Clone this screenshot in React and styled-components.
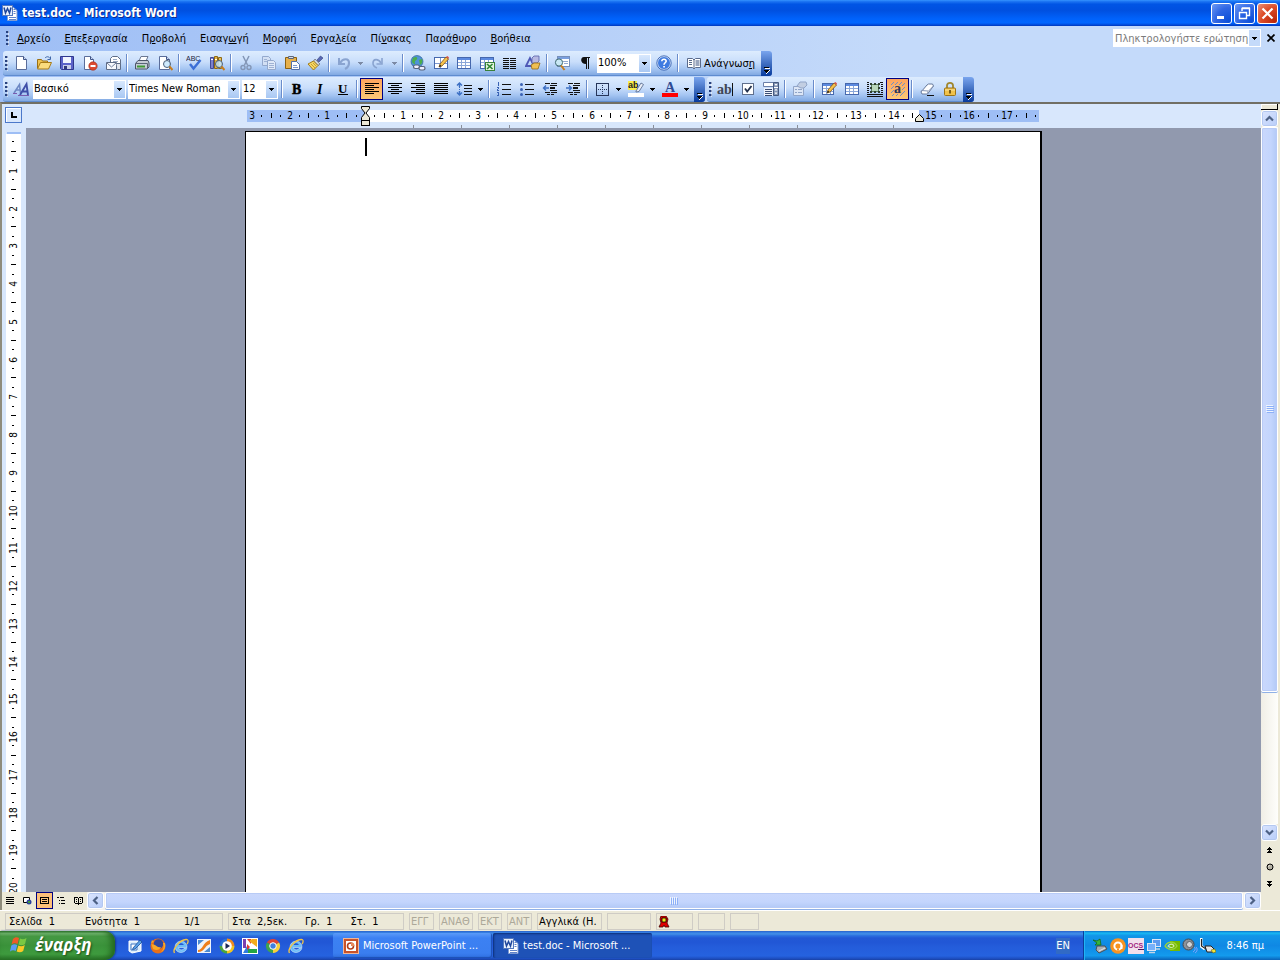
import styled, { createGlobalStyle } from 'styled-components';

const GlobalStyle = createGlobalStyle`
  * {
    box-sizing: border-box;
  }

  body {
    margin: 0;
    overflow: hidden;
  }

  body, button, input, select {
    font-family: 'DejaVu Sans Condensed', 'DejaVu Sans', sans-serif;
    font-size: 11px;
    color: #000;
  }

  button {
    padding: 0;
    border: none;
    background: none;
  }

  svg {
    display: block;
    flex: none;
  }
`;

const Window = styled.div`
  height: 100vh;
  display: flex;
  flex-direction: column;
  background: #ece9d8;
`;

/* ---------- title bar ---------- */

const TitleBar = styled.header`
  height: 26px;
  flex: none;
  display: flex;
  align-items: center;
  gap: 4px;
  padding: 0 2px;
  background: linear-gradient(#3593ff 0, #1b74f2 6%, #0055e5 16%, #0050e0 40%, #0062fb 72%, #0066ff 88%, #0048d8 96%, #0036b8);
`;

const Title = styled.h1`
  flex: 1;
  margin: 0;
  color: #fff;
  font-size: 12px;
  font-weight: bold;
  text-shadow: 1px 1px #0f2a8c;
`;

const CaptionButtons = styled.div`
  display: flex;
  gap: 2px;
`;

const CaptionButton = styled.button`
  width: 21px;
  height: 21px;
  display: grid;
  place-items: center;
  border: 1px solid #fff;
  border-radius: 3px;
  background: ${({ $close }) =>
    $close
      ? 'radial-gradient(circle at 90% 90%, #b8260a 0, #dc4a25 55%, #e9927a 100%)'
      : 'radial-gradient(circle at 90% 90%, #0c4fd8 0, #2f66e4 55%, #6f9bf5 100%)'};
`;

/* ---------- menus and toolbars ---------- */

const CommandArea = styled.div`
  flex: none;
  background: linear-gradient(90deg, #9ebef5, #c4dafa 70%);
`;

const MenuBar = styled.nav`
  height: 24px;
  display: flex;
  align-items: center;
  padding: 0 0 0 4px;
`;

const MenuItems = styled.div`
  flex: 1;
  display: flex;
`;

const MenuItem = styled.button`
  height: 20px;
  padding: 0 7px;
  white-space: nowrap;
`;

const AskBox = styled.div`
  display: flex;
  width: 148px;
  height: 18px;
  background: #fff;
  border: 1px solid #fff;
`;

const AskInput = styled.input`
  flex: 1;
  min-width: 0;
  border: none;
  padding: 0 1px;
  background: #fff;

  &::placeholder {
    color: #7b7b7b;
    opacity: 1;
  }
`;

const DropButton = styled.button`
  width: 11px;
  display: grid;
  place-items: center;
  background: #c4dafa;
`;

const CloseDocument = styled.button`
  width: 18px;
  height: 18px;
  margin-left: 1px;
  display: grid;
  place-items: center;
`;

const ToolbarRow = styled.div`
  height: 26px;
  display: flex;
  gap: 2px;
  padding: 1px 0 0 3px;
`;

const Bar = styled.div`
  height: 25px;
  display: flex;
  align-items: center;
  border-radius: 3px;
  background: linear-gradient(#ddecfe, #c9defb 45%, #a5c5f2 75%, #81a9e2);
  border-bottom: 1px solid #5f8ccf;
`;

const Grip = styled.span`
  width: 3px;
  height: 15px;
  margin: 0 1px 0 2px;
  background: repeating-linear-gradient(#27417f 0 2px, transparent 2px 4px);
  border-right: 1px solid #ffffff88;
`;

const ToolButton = styled.button`
  width: ${({ $narrow }) => ($narrow ? 11 : 23)}px;
  height: 22px;
  display: grid;
  place-items: center;
  border: 1px solid ${({ $active }) => ($active ? '#000080' : 'transparent')};
  background: ${({ $active }) => ($active ? 'linear-gradient(#fea55e, #fdc877)' : 'none')};
`;

const TextButton = styled.button`
  height: 22px;
  display: flex;
  align-items: center;
  gap: 2px;
  padding: 0 4px 0 5px;
`;

const Separator = styled.span`
  width: 2px;
  height: 18px;
  margin: 0 2px;
  background: linear-gradient(90deg, #6a8ccb 50%, #fff 50%);
`;

const Overflow = styled.button`
  align-self: stretch;
  width: 11px;
  margin: 0 0 -1px 2px;
  display: flex;
  align-items: flex-end;
  justify-content: center;
  padding-bottom: 2px;
  border-radius: 0 3px 3px 0;
  background: linear-gradient(#7aa5ee, #3a69bd 55%, #083b9e);
`;

const ComboFrame = styled.span`
  position: relative;
  width: ${({ $width }) => $width}px;
  height: 19px;
  margin: 0 1px;
  display: flex;
  background: #fff;
`;

const ComboSelect = styled.select`
  appearance: none;
  flex: 1;
  min-width: 0;
  border: 1px solid #fff;
  background: #fff;
  padding: 0 0 2px;
`;

const ComboArrow = styled.span`
  position: absolute;
  top: 1px;
  right: 1px;
  bottom: 1px;
  width: 11px;
  display: grid;
  place-items: center;
  background: linear-gradient(#d8e8fd, #a9c8f3);
  pointer-events: none;
`;

/* ---------- document area ---------- */

const Main = styled.main`
  flex: 1;
  min-height: 0;
  display: flex;
  border-top: 2px solid #716f64;
  border-left: 2px solid #8f8c7c;
`;

const DocumentColumn = styled.div`
  flex: 1;
  min-width: 0;
  display: flex;
  flex-direction: column;
`;

const RulerRow = styled.div`
  height: 24px;
  flex: none;
  display: flex;
  background: #d8e7fc;
`;

const TabCorner = styled.div`
  width: 24px;
  flex: none;
  padding: 3px;
`;

const TabSelector = styled.button`
  width: 17px;
  height: 16px;
  display: grid;
  place-items: center;
  border: 1px solid #4b78ca;
  background: #d8e7fc;
  box-shadow: inset 1px 1px #fff;
`;

const Centered = styled.div`
  flex: 1;
  display: flex;
  justify-content: center;
  overflow: hidden;
`;

const Workspace = styled.div`
  flex: 1;
  min-height: 0;
  display: flex;
  background: #9199ae;
`;

const SideRuler = styled.div`
  width: 24px;
  flex: none;
  padding: 4px 5px 0 4px;
  overflow: hidden;
  background: #d8e7fc;
`;

const Page = styled.article`
  width: 797px;
  margin-top: 3px;
  padding: 6px 119px;
  background: #fff;
  border: solid #000;
  border-width: 1px 2px 0 1px;
`;

const Caret = styled.span`
  display: block;
  width: 2px;
  height: 18px;
  background: #000;
`;

/* ---------- scroll bars ---------- */

const ScrollButton = styled.button`
  width: 17px;
  height: 17px;
  flex: none;
  display: grid;
  place-items: center;
  border: 1px solid #fff;
  border-radius: 3px;
  background: linear-gradient(135deg, #dbe5fe, #b8cdf9);
  box-shadow: inset 0 0 0 1px #b4c8f0;
`;

const BottomRow = styled.div`
  height: 18px;
  flex: none;
  display: flex;
  background: #ece9d8;
`;

const ViewButton = styled.button`
  width: 17px;
  height: 17px;
  display: grid;
  place-items: center;
  border: 1px solid ${({ $active }) => ($active ? '#000080' : 'transparent')};
  background: ${({ $active }) => ($active ? '#fdc079' : 'none')};
`;

const HorizontalTrack = styled.div`
  flex: 1;
  display: flex;
  gap: 1px;
  padding: 0 0 1px;
  background: #f3f1ec;
`;

const HorizontalThumb = styled.div`
  flex: 1;
  display: grid;
  place-items: center;
  border: 1px solid #fff;
  border-radius: 2px;
  background: linear-gradient(#cad8fc, #c3d5fd 60%, #b2c9f6);
  box-shadow: inset 0 0 0 1px #b8cbf6, 0 1px #8fb0e6;
`;

const ScrollColumn = styled.div`
  width: 19px;
  flex: none;
  display: flex;
  flex-direction: column;
  padding-right: 2px;
  background: #ece9d8;
`;

const SplitBox = styled.div`
  height: 6px;
  flex: none;
  border: solid #000;
  border-width: 0 1px 1px 0;
  background: #ece9d8;
  box-shadow: inset 1px 1px #fff;
`;

const VerticalTrack = styled.div`
  flex: 1;
  min-height: 0;
  background: linear-gradient(90deg, #f0eee6, #fefefb);
`;

const VerticalThumb = styled.div`
  height: 81%;
  display: grid;
  place-items: center;
  border: 1px solid #fff;
  border-radius: 2px;
  background: linear-gradient(90deg, #cad8fc, #c3d5fd 60%, #b2c9f6);
  box-shadow: inset 0 0 0 1px #b8cbf6, 0 1px #8fb0e6;
`;

const BrowseButtons = styled.div`
  flex: none;
  display: flex;
  flex-direction: column;
  margin-bottom: 18px;
`;

const BrowseButton = styled.button`
  height: 17px;
  display: grid;
  place-items: center;
`;

/* ---------- status bar ---------- */

const StatusBar = styled.footer`
  height: 21px;
  flex: none;
  display: flex;
  align-items: center;
  gap: 5px;
  padding: 1px 5px 0;
  border-top: 1px solid #fff;
  background: #ece9d8;
`;

const StatusCell = styled.div`
  width: ${({ $width }) => $width}px;
  height: 17px;
  display: flex;
  align-items: center;
  gap: ${({ $gap }) => $gap || 0}px;
  padding: 0 1px;
  border: 1px solid #cfccc5;
  white-space: nowrap;
  color: ${({ $off }) => ($off ? '#aca899' : '#000')};
`;

const StatusText = styled.span`
  padding: 0 2px;
`;

const StatusEnd = styled.span`
  margin-left: auto;
  padding-right: 21px;
`;

/* ---------- taskbar ---------- */

const TaskBar = styled.footer`
  height: 29px;
  flex: none;
  display: flex;
  background: linear-gradient(#2a62c8 0, #3682e5 6%, #4490e6 10%, #2b71e0 16%, #2258d5 24%, #2157d6 40%, #245ddb 56%, #2562df 86%, #1d4ec0 95%, #1941a5);
`;

const StartButton = styled.button`
  width: 115px;
  display: flex;
  align-items: center;
  gap: 5px;
  padding: 0 0 2px 10px;
  border-radius: 0 10px 10px 0;
  color: #fff;
  font-family: 'Open Sans', 'Noto Sans', sans-serif;
  font-size: 17px;
  font-style: italic;
  font-weight: bold;
  text-shadow: 1px 1px 2px #1c4a16;
  background: linear-gradient(#347a35 0, #7cc07a 8%, #479a45 18%, #3a923a 50%, #3f9c3f 80%, #2a7529 100%);
  box-shadow: inset -4px 0 6px #23671f, 1px 0 2px #133a8a;
`;

const QuickLaunch = styled.div`
  width: 218px;
  display: flex;
  align-items: center;
  padding-left: 8px;
`;

const QuickButton = styled.button`
  width: 23px;
  height: 24px;
  display: grid;
  place-items: center;
`;

const TaskList = styled.div`
  flex: 1;
  display: flex;
  align-items: center;
  gap: 1px;
`;

const TaskButton = styled.button`
  width: 159px;
  height: 25px;
  display: flex;
  align-items: center;
  gap: 4px;
  padding-left: 10px;
  color: #fff;
  border-radius: 2px;
  background: ${({ $active }) =>
    $active ? '#1e52b7' : 'linear-gradient(#5a9bf8, #3c81f3 20%, #3a7ef0 80%, #2f6fe0)'};
  box-shadow: ${({ $active }) =>
    $active ? 'inset 1px 1px 2px #0d2f78' : 'inset -1px -1px 1px #1d4fb5'};
`;

const Language = styled.button`
  align-self: center;
  width: 14px;
  height: 16px;
  margin-right: 13px;
  color: #fff;
  background: #316ac5;
`;

const Tray = styled.div`
  width: 197px;
  display: flex;
  align-items: center;
  padding: 0 16px 0 8px;
  color: #fff;
  border-left: 1px solid #0b3f9c;
  background: linear-gradient(#0c6fc9 0, #19b9f3 7%, #1296e8 16%, #0f88e4 50%, #139bee 85%, #0a62b8);
  box-shadow: inset 1px 0 #20b4f5;
`;

const TrayIcons = styled.div`
  flex: 1;
  display: flex;
  gap: 2px;
`;

/* ---------- drawings ---------- */

const Icon = ({ size = 16, box = 16, children }) => (
  <svg width={size} height={size} viewBox={`0 0 ${box} ${box}`} fill="none" aria-hidden="true">
    {children}
  </svg>
);

const Down = ({ color = '#000' }) => (
  <svg width="5" height="3" viewBox="0 0 5 3" shapeRendering="crispEdges" aria-hidden="true">
    <path d="M0 0h5v1H4v1H3v1H2V2H1V1H0z" fill={color} />
  </svg>
);

const Chevron = ({ turn }) => (
  <svg width="9" height="9" viewBox="0 0 9 9" fill="none" aria-hidden="true">
    <path d="M1 6.500l3.500-3.500L8 6.500" stroke="#4d6185" strokeWidth="2.200" transform={`rotate(${turn} 4.500 4.500)`} />
  </svg>
);

const OverflowMark = () => (
  <svg width="7" height="8" viewBox="0 0 7 8" shapeRendering="crispEdges" aria-hidden="true">
    <path d="M2 2h5v1H2zM2 4h5v1H6v1H5v1H4v1H3V6h1V5H2z" fill="#fff" />
    <path d="M1 1h5v1H1zM1 4h5v1H5v1H4v1H3V6H2V5H1z" fill="#000" />
  </svg>
);

const Sheet = ({ x = 3, y = 1, w = 10, h = 14 }) => (
  <>
    <path d={`M${x}.5 ${y}.5h${w - 3}l3 3v${h - 4}h-${w}z`} fill="#fff" stroke="#5a6d9a" />
    <path d={`M${x + w - 3}.5 ${y}.5v3h3`} fill="#cbd9f3" stroke="#3f5487" />
  </>
);

const TableGrid = ({ w = 13 }) => (
  <>
    <rect x="1.500" y="2.500" width={w} height="11" fill="#fff" stroke="#4668ad" />
    <path d={`M2 3h${w - 1}v2H2z`} fill="#5c8ae0" />
    <path d={`M2 7.500h${w - 1}M2 10.500h${w - 1}M5.500 5v8M9.500 5v8`} stroke="#8ba7d8" />
  </>
);

const Glass = () => (
  <>
    <circle cx="10" cy="9" r="3.500" fill="#c7e6fb" fillOpacity=".85" stroke="#4d6078" />
    <path d="M12.500 11.500l3 3.500" stroke="#c77d1d" strokeWidth="2" />
  </>
);

const Pencil = () => (
  <>
    <path d="M6 12l1-3 6-7 2.500 2-6.500 7z" fill="#f7c34c" stroke="#7f5213" strokeWidth=".8" />
    <path d="M13 2l2.500 2 .5-1.500L14.500 1z" fill="#d9534b" />
    <path d="M6 12l1-2.500L8.500 11z" fill="#222" />
  </>
);

const WordIcon = () => (
  <Icon>
    <path d="M5.500 2.500h6l3.500 3v10H5.500z" fill="#fff" stroke="#7f9bd2" />
    <path d="M11.500 4.500h2M11.500 6.500h2M11.500 8.500h2M7 12.500h7M7 14.500h7" stroke="#5f83c9" />
    <rect x=".500" y=".500" width="10" height="10" fill="#eaf1fd" stroke="#5579bd" />
    <path d="M2 2.500l1.500 5.500L5.500 3.500l2 4.500L9 2.500" stroke="#1f479c" strokeWidth="1.500" />
  </Icon>
);

const lines = (rows) => rows.map(([x, w], i) => <path key={i} d={`M${x} ${2 + i * 2}h${w}v1h-${w}z`} fill="#000" />);

const icons = {
  newDoc: <Sheet />,
  open: (
    <>
      <path d="M1.500 13V4.500h4l1 1.500h5v2" fill="#f0c350" stroke="#9a7014" />
      <path d="M1.500 14l3-6.500h11L12.500 14z" fill="#fbdc7e" stroke="#a67a18" />
      <path d="M9 3c2-2 4-1.500 5 .500M14.500 1.500v3h-3" stroke="#3f67a8" />
    </>
  ),
  save: (
    <>
      <path d="M1.500 1.500h13v13h-12l-1-1z" fill="#5b62c8" stroke="#2f378d" />
      <path d="M4 2h8v6H4z" fill="#f1f4ff" />
      <path d="M4 10h8v4H4z" fill="#c8cde8" />
      <path d="M5 11h3v3H5z" fill="#30387c" />
    </>
  ),
  permission: (
    <>
      <Sheet x={2} w={9} />
      <circle cx="11" cy="11" r="4.200" fill="#dc4a31" stroke="#a02613" strokeWidth=".6" />
      <path d="M8.500 11h5" stroke="#fff" strokeWidth="2" />
    </>
  ),
  mail: (
    <>
      <path d="M5.500 8V3.500l2-2h5l3 3V12" fill="#fff" stroke="#5f6d86" />
      <path d="M8 4.500h4M8 6.500h5" stroke="#9baac4" />
      <path d="M1.500 7.500h10v7h-10z" fill="#f7f9fd" stroke="#5f6d86" />
      <path d="M2 8l4.500 4L11 8" stroke="#707f9d" />
      <path d="M11.500 8.500h4v6h-3" fill="#e2e6ee" stroke="#5f6d86" />
    </>
  ),
  print: (
    <>
      <path d="M5 6l2-4.500h7L12 6" fill="#fff" stroke="#6b7891" />
      <path d="M1.500 8.500l2.500-3h10l1 2.500v4l-2 2H1.500z" fill="#c6ccd6" stroke="#4c5567" />
      <path d="M2 8.500h11.500v5" stroke="#5a6478" />
      <path d="M3 11.500h8" stroke="#3f9a34" strokeWidth="2" />
    </>
  ),
  preview: (
    <>
      <Sheet x={2} w={10} />
      <Glass />
    </>
  ),
  spell: (
    <>
      <text x="0" y="6" fontSize="7" fontFamily="Liberation Sans, sans-serif" fill="#1c2440">ABC</text>
      <path d="M4 9l3.500 4.500L14.500 5" stroke="#3c6fd6" strokeWidth="2.400" />
    </>
  ),
  research: (
    <>
      <path d="M1.500 2.500h3v11h-3z" fill="#7c82cf" stroke="#454b95" />
      <path d="M5.500 1.500h3v12h-3z" fill="#e2b448" stroke="#8f6a15" />
      <path d="M9.500 2.500h3v11h-3z" fill="#e7c05c" stroke="#8f6a15" />
      <path d="M2 4.500h2M6 4.500h2" stroke="#fff" />
      <Glass />
    </>
  ),
  cut: (
    <>
      <path d="M5 1l4.500 9M11 1l-4.500 9" stroke="#8396b6" strokeWidth="1.500" />
      <circle cx="5" cy="12.500" r="2" stroke="#8396b6" strokeWidth="1.400" />
      <circle cx="11" cy="12.500" r="2" stroke="#8396b6" strokeWidth="1.400" />
    </>
  ),
  copy: (
    <>
      <path d="M1.500 1.500h6l2 2v7h-8z" fill="#d3e0f4" stroke="#94a9cd" />
      <path d="M6.500 5.500h6l2 2v7h-8z" fill="#dfe9f8" stroke="#94a9cd" />
      <path d="M8 8.500h5M8 10.500h5M8 12.500h5M3 4.500h3M3 6.500h3" stroke="#9fb2d3" />
    </>
  ),
  paste: (
    <>
      <path d="M1.500 2.500h11v11h-11z" fill="#e6b04b" stroke="#8b6112" />
      <path d="M4.500 1.500h5v2h-5z" fill="#d8dce6" stroke="#5d6678" />
      <path d="M7.500 6.500h5l3 3v5h-8z" fill="#fff" stroke="#5371ab" />
      <path d="M9 10.500h4M9 12.500h5" stroke="#7a97cf" />
    </>
  ),
  brush: (
    <>
      <path d="M10 5l3.500-4L16 3l-4 4z" fill="#5868b4" stroke="#343f7c" strokeWidth=".6" />
      <path d="M8 4l5 5-2 1.500L6.500 6z" fill="#cfd4dc" stroke="#6d7583" strokeWidth=".8" />
      <path d="M6.500 6L1 9l5.500 6L11 10.500z" fill="#f5d765" stroke="#a27c19" />
      <path d="M4 9l4 4M6 8l3.500 3.500" stroke="#c89d2d" />
    </>
  ),
  undo: (
    <>
      <path d="M3 3v6h6" stroke="#8aa4d0" strokeWidth="2" />
      <path d="M4 8c3-5 9-5 9 0 0 3-2 5-4 6" stroke="#8aa4d0" strokeWidth="2.200" />
    </>
  ),
  redo: (
    <>
      <path d="M12 3v6H6.500" stroke="#8aa4d0" strokeWidth="1.600" />
      <path d="M11 8c-3-5-8-4-8 0 0 2 1 4 4 5" stroke="#8aa4d0" strokeWidth="1.600" />
    </>
  ),
  link: (
    <>
      <circle cx="7" cy="6.500" r="6" fill="#4f93d8" stroke="#235788" strokeWidth=".6" />
      <path d="M3 3c3-2 5-1 4 1s-3 2-2 4-3 1-3-2zM9 5l3-1c1 3 0 5-2 6z" fill="#4cae4a" />
      <rect x="3.500" y="10" width="6" height="3.500" rx="1.700" fill="#eef" stroke="#56627b" strokeWidth="1.200" />
      <rect x="9" y="11.500" width="6" height="3.500" rx="1.700" fill="#eef" stroke="#56627b" strokeWidth="1.200" />
    </>
  ),
  borders: (
    <>
      <rect x="1.500" y="2.500" width="13" height="11" fill="#fff" stroke="#4668ad" />
      <path d="M2 8.500h12M7.500 3v10" stroke="#7d98cd" />
      <Pencil />
    </>
  ),
  table: <TableGrid />,
  excel: (
    <>
      <TableGrid />
      <rect x="6.500" y="7.500" width="9" height="8" fill="#e4f4df" stroke="#39803a" />
      <path d="M8 9l5.500 5M13.500 9L8 14" stroke="#2c8430" strokeWidth="1.600" />
    </>
  ),
  columns: (
    <path d="M1 3h6v1H1zM1 5h6v1H1zM1 7h6v1H1zM1 9h6v1H1zM1 11h6v1H1zM1 13h6v1H1zM8 3h6v1H8zM8 5h6v1H8zM8 7h6v1H8zM8 9h6v1H8zM8 11h6v1H8zM8 13h6v1H8z" fill="#111" />
  ),
  drawing: (
    <>
      <path d="M1 11L5 3l4 8z" stroke="#4e58b6" strokeWidth="1.800" />
      <path d="M7 3l2-2h5v5l-2 2H7z" fill="#b7b9e2" stroke="#595fa8" strokeWidth=".8" />
      <path d="M6 10l3-2h6l-2 6H7z" fill="#eebf53" stroke="#956a14" strokeWidth=".8" />
    </>
  ),
  docMap: (
    <>
      <rect x="3.500" y="1.500" width="12" height="10" fill="#fff" stroke="#7790ba" />
      <path d="M4 2h11v2H4z" fill="#7ba0e0" />
      <path d="M9 6.500h5M10 8.500h4" stroke="#93a9d1" />
      <circle cx="5" cy="7.500" r="3.600" fill="#c9e8f5" stroke="#3f6a71" />
      <path d="M7 10.500l3.500 4.500" stroke="#c77d1d" strokeWidth="2" />
    </>
  ),
  pilcrow: <path d="M7 2h6v1h-1v11h-1V3h-1v11H9V9C3 9 3 2 7 2z" fill="#111" />,
  help: (
    <>
      <circle cx="8" cy="8" r="6.500" fill="#3f7be0" stroke="#dce8fb" />
      <circle cx="8" cy="8" r="7.200" stroke="#2b57a9" strokeWidth=".8" />
      <path d="M5.800 6.200C6 3.500 10.300 3.800 10.200 6.200 10 7.800 8 7.800 8 9.800" stroke="#fff" strokeWidth="1.600" />
      <path d="M7.200 11h1.700v1.600H7.200z" fill="#fff" />
    </>
  ),
  read: (
    <>
      <path d="M1.500 3.500h5L8 5l1.500-1.500h5v9h-5L8 14l-1.500-1.500h-5z" fill="#fff" stroke="#5a6b8c" />
      <path d="M8 5v9M3 5.500h3M3 7.500h3M3 9.500h3" stroke="#5a6b8c" />
      <path d="M9.500 5h4v6h-4z" fill="#9aa6be" />
    </>
  ),
  styles: (
    <>
      <path d="M1 12L6.500 3.500 7.500 12M3.500 9H7" stroke="#6d88c4" strokeWidth="1.600" />
      <path d="M7 14l6.500-11L15 14M9.500 10.500H14" stroke="#3e4fa8" strokeWidth="1.900" />
      <path d="M0 12.500h4M5 14.500h11" stroke="#7a5cae" />
    </>
  ),
  bold: <text x="3" y="13" fontFamily="Liberation Serif, serif" fontWeight="bold" fontSize="14" fill="#000" stroke="#000" strokeWidth=".5">B</text>,
  italic: <text x="5" y="13" fontFamily="Liberation Serif, serif" fontWeight="bold" fontStyle="italic" fontSize="14" fill="#000">I</text>,
  underline: (
    <>
      <text x="3" y="12" fontFamily="Liberation Serif, serif" fontWeight="bold" fontSize="13" fill="#000">U</text>
      <path d="M3 13.500h10" stroke="#000" />
    </>
  ),
  left: lines([[1, 14], [1, 9], [1, 14], [1, 9], [1, 14], [1, 9]]),
  center: lines([[1, 14], [4, 8], [1, 14], [4, 8], [1, 14], [4, 8]]),
  right: lines([[1, 14], [6, 9], [1, 14], [6, 9], [1, 14], [6, 9]]),
  justify: lines([[1, 14], [1, 14], [1, 14], [1, 14], [1, 14], [1, 14]]),
  spacing: (
    <>
      <path d="M3.500 2v4M3.500 10v4M1 4.500L3.500 2 6 4.500M1 11.500L3.500 14 6 11.500" stroke="#3d70c4" strokeWidth="1.500" />
      <path d="M3.500 6v4" stroke="#3d70c4" strokeDasharray="1 1" />
      <path d="M8 4h8v1H8zM8 7h8v1H8zM8 10h8v1H8zM8 13h8v1H8z" fill="#111" />
    </>
  ),
  numbers: (
    <>
      <path d="M2 1h1v4H2zM1 6h2v2H2v1h1v1H1V8h1V7H1zM1 11h2v4H1v-1h1v-2H1z" fill="#3a62b4" />
      <path d="M6 3h9v1H6zM6 8h9v1H6zM6 13h9v1H6z" fill="#111" />
    </>
  ),
  bullets: (
    <>
      <circle cx="2.500" cy="3.500" r="1.500" fill="#3a62b4" />
      <circle cx="2.500" cy="8.500" r="1.500" fill="#3a62b4" />
      <circle cx="2.500" cy="13.500" r="1.500" fill="#3a62b4" />
      <path d="M6 3h9v1H6zM6 8h9v1H6zM6 13h9v1H6z" fill="#111" />
    </>
  ),
  outdent: (
    <>
      <path d="M3 2h5v1H3zM9 2h6v1H9zM8 4h7v1H8zM8 6h5v2H8zM8 9h7v1H8zM3 11h5v1H3zM9 11h6v1H9zM5 13h3v1H5zM9 13h3v1H9z" fill="#111" />
      <path d="M7 7H1.500M4 4.500L1.500 7 4 9.500" stroke="#3d70c4" strokeWidth="1.400" />
    </>
  ),
  indent: (
    <>
      <path d="M3 2h5v1H3zM9 2h6v1H9zM8 4h7v1H8zM8 6h5v2H8zM8 9h7v1H8zM3 11h5v1H3zM9 11h6v1H9zM5 13h3v1H5zM9 13h3v1H9z" fill="#111" />
      <path d="M1 7h5.500M4 4.500L6.500 7 4 9.500" stroke="#3d70c4" strokeWidth="1.400" />
    </>
  ),
  outline: (
    <>
      <rect x="2.500" y="2.500" width="12" height="12" stroke="#26355a" />
      <path d="M8.500 4v10M4 8.500h10" stroke="#26355a" strokeDasharray="1 1" />
    </>
  ),
  highlight: (
    <>
      <rect x="0" y="0" width="9" height="9" fill="#f8ee4a" />
      <text x="0" y="7" fontSize="9" fontWeight="bold" fontFamily="Liberation Sans, sans-serif" fill="#222">ab</text>
      <path d="M8 10l5-8 2.500 1.500-4.500 7-3 .500z" fill="#e8edf7" stroke="#5e7093" strokeWidth=".9" />
      <rect x="0" y="12" width="16" height="4" fill="#fff" />
    </>
  ),
  fontColor: (
    <>
      <text x="3" y="11" fontSize="14" fontWeight="bold" fontFamily="Liberation Serif, serif" fill="#2f4a93">A</text>
      <rect x="0" y="12" width="16" height="4" fill="#f00" />
    </>
  ),
  textField: (
    <>
      <text x="0" y="13" fontSize="14" fontWeight="bold" fontFamily="Liberation Serif, serif" fill="#3e4654">ab</text>
      <path d="M15.500 2v13" stroke="#111" />
    </>
  ),
  checkField: (
    <>
      <rect x="2.500" y="2.500" width="11" height="11" fill="#fff" stroke="#5f6f8d" />
      <path d="M5 7.500l2.200 3L11.500 5" stroke="#22304c" strokeWidth="1.800" />
    </>
  ),
  dropField: (
    <>
      <path d="M.500 1.500h10v4h-10z" fill="#fff" stroke="#6a7fa9" />
      <path d="M1 7h9v8H1z" fill="#eef3fc" />
      <path d="M10.500 1.500h5v13h-5z" fill="#8294b5" stroke="#46597f" />
      <path d="M2 8.500h7M2 10.500h7M2 12.500h7M2 14.500h7" stroke="#3b4d73" />
      <path d="M11.500 3h3L13 5zM11.500 9.500h3L13 7.500zM11.500 11.500h3L13 13.500z" fill="#fff" />
      <path d="M11 6.500h4" stroke="#fff" />
    </>
  ),
  options: (
    <>
      <path d="M1.500 5.500h10v9h-10z" fill="#dce6f6" stroke="#91a5c8" />
      <path d="M3 8.500h2M3 11.500h2M6 8.500h4M6 11.500h4" stroke="#91a5c8" />
      <path d="M5 5l3-4h6l1 3-3 3H9z" fill="#c2cee2" stroke="#91a5c8" />
    </>
  ),
  drawTable: (
    <>
      <TableGrid w={11} />
      <Pencil />
    </>
  ),
  frame: (
    <>
      <path d="M0 1h2v1H0zM13 1h3v1h-3zM0 3h2v1H0zM0 5h2v1H0zM0 7h2v1H0zM0 9h2v1H0zM0 11h2v1H0zM14 3h2v1h-2zM14 5h2v1h-2zM14 7h2v1h-2zM14 9h2v1h-2zM14 11h2v1h-2zM0 13h16v1H0zM0 15h16v1H0z" fill="#111" />
      <rect x="4.500" y="3.500" width="7" height="7" fill="#b8d7ba" stroke="#5b7c5f" />
      <path d="M3 2h2v2H3zM7 2h2v2H7zM11 2h2v2h-2zM3 6h2v2H3zM11 6h2v2h-2zM3 10h2v2H3zM7 10h2v2H7zM11 10h2v2h-2z" fill="#2d3f2f" />
    </>
  ),
  shading: (
    <>
      <path d="M1 4l3-3M1 8l7-7M1 12l11-11M2 15L15 2M6 15l9-9M10 15l5-5" stroke="#6f8ec9" strokeWidth="1" />
      <rect x="4" y="4" width="8" height="9" fill="#fcb56a" />
      <text x="4" y="12" fontSize="14" fontWeight="bold" fontFamily="Liberation Serif, serif" fill="#26355c">a</text>
    </>
  ),
  eraser: (
    <>
      <path d="M2 11l6-7 1.500-1h4l1 2-6 8H3z" fill="#fff" stroke="#67799b" />
      <path d="M8.500 13L9 10.500 14.500 5M2 11l.500-1.500L9 10" stroke="#8797b5" />
      <path d="M8 14.500h7" stroke="#111" />
    </>
  ),
  lock: (
    <>
      <path d="M5 7V4.500C5 1 11 1 11 4.500V7" stroke="#a0872f" strokeWidth="1.800" />
      <rect x="2.500" y="7" width="11" height="7.500" rx="1" fill="#f0c24c" stroke="#9c7316" />
      <path d="M3 9h10" stroke="#fbe39b" />
      <path d="M7.200 9h1.600v3.500H7.200z" fill="#5e430b" />
    </>
  ),
};

const glyph = (d, size = 10) => (
  <svg width={size} height={size} viewBox={`0 0 ${size} ${size}`} shapeRendering="crispEdges" aria-hidden="true">
    <path d={d} fill="#000" />
  </svg>
);

const views = [
  ['Κανονική προβολή', glyph('M0 1h8v1H0zM0 3h8v1H0zM0 5h8v1H0zM0 7h8v1H0z', 9)],
  [
    'Διάταξη Web',
    <Icon size={9} box={9} key="web">
      <path d="M.500 1.500h6v5h-6z" stroke="#000" fill="#fff" />
      <circle cx="6" cy="6" r="2.500" fill="#2c3f9e" />
      <path d="M5 5h2v2H5z" fill="#3c9a3c" />
    </Icon>,
  ],
  ['Διάταξη εκτύπωσης', glyph('M0 1h9v7H0zM1 2v5h7V2zM2 3h5v1H2zM2 5h5v1H2z', 9)],
  ['Διάρθρωση', glyph('M0 1h2v1H0zM3 1h4v1H3zM2 4h1v1H2zM4 4h4v1H4zM2 7h1v1H2zM4 7h4v1H4z', 9)],
  ['Ανάγνωση', glyph('M0 1h1v6H0zM1 1h3v1H1zM4 2h1v7H4zM5 1h3v1H5zM8 1h1v6H8zM1 7h3v1H1zM5 7h3v1H5zM2 3h1v1H2zM6 3h1v1H6zM2 5h1v1H2zM6 5h1v1H6z', 9)],
];

const quickLaunch = [
  [
    'Επιφάνεια εργασίας',
    <>
      <path d="M2 3h9l3 2v8l-9 2-3-2z" fill="#dcecfa" stroke="#fff" />
      <path d="M4 6h6v6H4z" fill="#fff" stroke="#3c77c4" />
      <path d="M6 10l7-8 2 2-7 7-2.500.500z" fill="#5aa0e6" stroke="#1b4f9c" strokeWidth=".8" />
    </>,
  ],
  [
    'Firefox',
    <>
      <circle cx="8" cy="8" r="7.500" fill="#e8701a" />
      <circle cx="8.500" cy="6" r="4.800" fill="#31479e" />
      <path d="M1 5c1 2 2 1 4 2s3 3 6 2c-1 3-5 4-8 2M1 5l1-3 2 2M15 5c1 4-1 8-4 9 3-3 3-6 2-9z" fill="#f8a826" />
    </>,
  ],
  ['Internet Explorer', 'ie'],
  [
    'Outlook',
    <>
      <rect x="1" y="1" width="14" height="14" fill="#eef3fb" />
      <path d="M2 12c5 0 4-7 12-10v4c-6 2-5 8-12 8z" fill="#ef7f1c" />
      <path d="M2 2h6L2 7zM14 9v5H8z" fill="#4b8ad2" />
    </>,
  ],
  [
    'Media Player',
    <>
      <circle cx="8" cy="8" r="7.500" fill="#2a72d4" />
      <path d="M8 .500a7.500 7.500 0 0 1 7.500 7.500H8z" fill="#ef8b1d" />
      <path d="M.500 8a7.500 7.500 0 0 0 7.500 7.500V8z" fill="#4aa63c" />
      <path d="M8 15.500a7.500 7.500 0 0 0 7.500-7.500H8z" fill="#f0c522" />
      <circle cx="8" cy="8" r="4.800" fill="#fff" />
      <path d="M6.500 5l4.500 3-4.500 3z" fill="#1b2a55" />
    </>,
  ],
  [
    'Picasa',
    <>
      <path d="M0 0h16v16H0z" fill="#fff" />
      <path d="M1 1h3v9H1z" fill="#7a3fb0" />
      <path d="M5 1h4v5z" fill="#e33a2c" />
      <path d="M10 1h5v8L7 3z" fill="#f1ac1e" />
      <path d="M1 15l4-7 3 3v4z" fill="#2f7de0" />
      <path d="M6 11h9v4H6z" fill="#25a544" />
      <path d="M5 6l3 3-3 3z" fill="#e33a2c" />
    </>,
  ],
  [
    'Chrome',
    <>
      <path d="M8 8L1.900 4.500A7 7 0 0 1 14.100 4.500z" fill="#df4332" />
      <path d="M8 8l6.100-3.500A7 7 0 0 1 8 15z" fill="#f8d03b" />
      <path d="M8 8v7A7 7 0 0 1 1.900 4.500z" fill="#3fa24d" />
      <circle cx="8" cy="8" r="3.300" fill="#3f7fe0" stroke="#fff" />
    </>,
  ],
  ['Internet Explorer 8', 'ie'],
];

const explorer = (
  <>
    <path d="M14 9.500H5.500c.5 3 4.500 3 5.500 1h2.800C11.500 16.500 2 15.500 2.200 8.500 2.500 1.500 14 1 14 9.500z" fill="#6cbcf8" stroke="#d5effe" strokeWidth=".6" />
    <path d="M5.500 7c.5-2.500 4.800-2.500 5.300 0z" fill="#235ad6" />
    <path d="M1.500 15C-1 11 7 2 13 1.500c3-.300 2.200 3 1 4.500" stroke="#f2c546" strokeWidth="1.300" />
  </>
);

const tray = [
  [
    'Ασφαλής κατάργηση',
    <>
      <path d="M5 8l8 0 2 3-8 4-3-3z" fill="#a9adb2" stroke="#494e55" />
      <path d="M7 13l6-3" stroke="#e3e6ea" />
      <path d="M1 2l4 1 3-2 1 6H3l2-2z" fill="#38b43c" stroke="#14691a" strokeWidth=".8" />
    </>,
  ],
  [
    'Avast',
    <>
      <circle cx="8" cy="8" r="7.800" fill="#f79421" />
      <circle cx="8" cy="8" r="3.600" stroke="#fff" strokeWidth="2" />
      <path d="M11.500 7v4" stroke="#fff" strokeWidth="2" />
      <path d="M7 11.500h2" stroke="#f79421" strokeWidth="2" />
    </>,
  ],
  [
    'OCS',
    <>
      <path d="M0 0h16v16H0z" fill="#f2dfec" />
      <text x="0" y="10" fontSize="7" fontFamily="Liberation Sans, sans-serif" fontWeight="bold" fill="#a22480">OCS</text>
      <path d="M10 11.500h6" stroke="#4a1b62" />
    </>,
  ],
  [
    'Δίκτυο',
    <>
      <rect x="6.500" y="1.500" width="8" height="7" fill="#5d9bf0" stroke="#dbe7f7" />
      <rect x="1.500" y="5.500" width="8" height="7" fill="#77b1fa" stroke="#dbe7f7" />
      <path d="M3 14.500h6M10 11h4" stroke="#c6d4e6" strokeWidth="1.500" />
    </>,
  ],
  [
    'NVIDIA',
    <>
      <path d="M6 3h10v10H6z" fill="#76b900" />
      <path d="M1 8c3-5 9-5 12 0-3 5-9 4-12 0z" stroke="#9ad23c" strokeWidth="1.300" />
      <path d="M4 8c2-2.500 5-2.500 6 0-1 2-4 2-6 0z" stroke="#d4efaa" strokeWidth="1.200" />
    </>,
  ],
  [
    'Ένταση',
    <>
      <circle cx="6.500" cy="6.500" r="5.500" fill="#8d9299" stroke="#45494f" />
      <circle cx="7.500" cy="6.500" r="3" fill="#d1d5da" stroke="#5a5f66" />
      <path d="M12 9c2 1 1 4-1 5M14 9c2 2 1 5-1 6" stroke="#8fa6ff" />
    </>,
  ],
  [
    'Αφαίρεση υλικού',
    <>
      <path d="M1 0v8l4 3" stroke="#fff" strokeWidth="3" />
      <path d="M1.500 1v7L6 11" stroke="#222" strokeWidth="1.200" />
      <path d="M5 8h6l4 4-2 2H7z" fill="#e5e5e5" stroke="#222" />
      <path d="M11 12l4-1 1 3-3 1z" fill="#f2e53a" stroke="#6b6410" strokeWidth=".6" />
    </>,
  ],
];

/* ---------- rulers ---------- */

const CM = 37.75;

const marks = (from, to) => Array.from({ length: to - from + 1 }, (_, i) => from + i).filter((n) => n !== 0);

const HorizontalRuler = () => (
  <svg width="797" height="24" viewBox="0 0 797 24" shapeRendering="crispEdges" aria-hidden="true">
    <rect x="2" y="6" width="792" height="12" fill="#9ebef5" />
    <rect x="120" y="6" width="554" height="12" fill="#fff" />
    {marks(-12, 71).filter((n) => n !== 59).map((n) => {
      const x = Math.round(120 + (n * CM) / 4);
      if (n % 4 === 0) {
        return (
          <text key={n} x={x} y="15" fontSize="10" textAnchor="middle">
            {Math.abs(n / 4)}
          </text>
        );
      }
      const tall = n % 2 === 0;
      return <rect key={n} x={x} y={tall ? 9 : 11} width="1" height={tall ? 5 : 2} fill="#000" />;
    })}
    {Array.from({ length: 11 }, (_, i) => (
      <rect key={i} x={168 + i * 48} y="21" width="1" height="3" fill="#8a8f99" />
    ))}
    <g fill="#ece9d8" stroke="#000" shapeRendering="auto">
      <path d="M116.500 2.500h8v2l-3.500 4.500 3.500 4.500v3h-8v-3l3.500-4.500-3.500-4.500z" />
      <rect x="116.500" y="16.500" width="8" height="5" />
      <path d="M670.500 17.500v-3l4-4 4 4v3z" />
    </g>
  </svg>
);

const VerticalRuler = () => (
  <svg width="15" height="100%" aria-hidden="true" shapeRendering="crispEdges">
    <rect x="1" width="14" height="2" fill="#9ebef5" />
    <rect y="2" width="15" height="100%" fill="#fff" />
    {marks(1, 80).map((n) => {
      const y = Math.round((n * CM) / 4);
      if (n % 4 === 0) {
        return (
          <text key={n} x="0" y="0" fontSize="10" textAnchor="middle" transform={`translate(11 ${y + 1}) rotate(-90)`}>
            {n / 4}
          </text>
        );
      }
      const wide = n % 2 === 0;
      return <rect key={n} x={wide ? 5 : 6} y={y} width={wide ? 5 : 2} height="1" fill="#000" />;
    })}
  </svg>
);

/* ---------- composed parts ---------- */

const Tool = ({ icon, label, active }) => (
  <ToolButton aria-label={label} title={label} $active={active}>
    <Icon>{icons[icon]}</Icon>
  </ToolButton>
);

const Arrow = ({ label, off }) => (
  <ToolButton aria-label={label} $narrow>
    <Down color={off ? '#7c8aa5' : '#000'} />
  </ToolButton>
);

const Combo = ({ label, value, width }) => (
  <ComboFrame $width={width}>
    <ComboSelect aria-label={label} defaultValue={value}>
      <option>{value}</option>
    </ComboSelect>
    <ComboArrow>
      <Down />
    </ComboArrow>
  </ComboFrame>
);

const More = () => (
  <Overflow aria-label="Επιλογές γραμμής εργαλείων">
    <OverflowMark />
  </Overflow>
);

const menus = [
  ['', 'Α', 'ρχείο'],
  ['', 'Ε', 'πεξεργασία'],
  ['Π', 'ρ', 'οβολή'],
  ['Εισαγ', 'ω', 'γή'],
  ['', 'Μ', 'ορφή'],
  ['Εργα', 'λ', 'εία'],
  ['Πί', 'ν', 'ακας'],
  ['Παρά', 'θ', 'υρο'],
  ['', 'Β', 'οήθεια'],
];

const Toolbars = () => (
  <>
    <ToolbarRow>
      <Bar role="toolbar" aria-label="Βασική">
        <Grip />
        <Tool icon="newDoc" label="Νέο" />
        <Tool icon="open" label="Άνοιγμα" />
        <Tool icon="save" label="Αποθήκευση" />
        <Tool icon="permission" label="Δικαιώματα" />
        <Tool icon="mail" label="Ηλεκτρονικό ταχυδρομείο" />
        <Separator />
        <Tool icon="print" label="Εκτύπωση" />
        <Tool icon="preview" label="Προεπισκόπηση" />
        <Separator />
        <Tool icon="spell" label="Ορθογραφία" />
        <Tool icon="research" label="Έρευνα" />
        <Separator />
        <Tool icon="cut" label="Αποκοπή" />
        <Tool icon="copy" label="Αντιγραφή" />
        <Tool icon="paste" label="Επικόλληση" />
        <Tool icon="brush" label="Πινέλο μορφοποίησης" />
        <Separator />
        <Tool icon="undo" label="Αναίρεση" />
        <Arrow label="Λίστα αναίρεσης" off />
        <Tool icon="redo" label="Ακύρωση αναίρεσης" />
        <Arrow label="Λίστα ακύρωσης" off />
        <Separator />
        <Tool icon="link" label="Υπερ-σύνδεση" />
        <Tool icon="borders" label="Πίνακες και περιγράμματα" />
        <Tool icon="table" label="Εισαγωγή πίνακα" />
        <Tool icon="excel" label="Φύλλο Excel" />
        <Tool icon="columns" label="Στήλες" />
        <Tool icon="drawing" label="Σχεδίαση" />
        <Separator />
        <Tool icon="docMap" label="Χάρτης εγγράφου" />
        <Tool icon="pilcrow" label="Εμφάνιση όλων" />
        <Combo label="Ζουμ" value="100%" width={54} />
        <Tool icon="help" label="Βοήθεια" />
        <Separator />
        <TextButton>
          <Icon>{icons.read}</Icon>
          <span>
            Ανάγνωσ<u>η</u>
          </span>
        </TextButton>
        <More />
      </Bar>
    </ToolbarRow>
    <ToolbarRow>
      <Bar role="toolbar" aria-label="Μορφοποίηση">
        <Grip />
        <Tool icon="styles" label="Στυλ και μορφοποίηση" />
        <Combo label="Στυλ" value="Βασικό" width={93} />
        <Combo label="Γραμματοσειρά" value="Times New Roman" width={112} />
        <Combo label="Μέγεθος" value="12" width={36} />
        <Separator />
        <Tool icon="bold" label="Έντονα" />
        <Tool icon="italic" label="Πλάγια" />
        <Tool icon="underline" label="Υπογράμμιση" />
        <Separator />
        <Tool icon="left" label="Αριστερά" active />
        <Tool icon="center" label="Κέντρο" />
        <Tool icon="right" label="Δεξιά" />
        <Tool icon="justify" label="Πλήρης" />
        <Tool icon="spacing" label="Διάστιχο" />
        <Arrow label="Επιλογές διάστιχου" />
        <Separator />
        <Tool icon="numbers" label="Αρίθμηση" />
        <Tool icon="bullets" label="Κουκκίδες" />
        <Tool icon="outdent" label="Μείωση εσοχής" />
        <Tool icon="indent" label="Αύξηση εσοχής" />
        <Separator />
        <Tool icon="outline" label="Περίγραμμα" />
        <Arrow label="Επιλογές περιγράμματος" />
        <Tool icon="highlight" label="Επισήμανση" />
        <Arrow label="Χρώμα επισήμανσης" />
        <Tool icon="fontColor" label="Χρώμα γραμματοσειράς" />
        <Arrow label="Επιλογές χρώματος" />
        <More />
      </Bar>
      <Bar role="toolbar" aria-label="Φόρμες">
        <Grip />
        <Tool icon="textField" label="Πεδίο κειμένου" />
        <Tool icon="checkField" label="Πλαίσιο ελέγχου" />
        <Tool icon="dropField" label="Αναπτυσσόμενη λίστα" />
        <Separator />
        <Tool icon="options" label="Επιλογές πεδίου" />
        <Separator />
        <Tool icon="drawTable" label="Σχεδίαση πίνακα" />
        <Tool icon="table" label="Πίνακας" />
        <Tool icon="frame" label="Πλαίσιο" />
        <Tool icon="shading" label="Σκίαση πεδίου" active />
        <Separator />
        <Tool icon="eraser" label="Επαναφορά πεδίων" />
        <Tool icon="lock" label="Προστασία φόρμας" />
        <More />
      </Bar>
    </ToolbarRow>
  </>
);

const App = () => (
  <Window>
    <GlobalStyle />
    <TitleBar>
      <WordIcon />
      <Title>test.doc - Microsoft Word</Title>
      <CaptionButtons>
        <CaptionButton aria-label="Ελαχιστοποίηση">
          <Icon size={15} box={15}>
            <path d="M3 10h7v3H3z" fill="#fff" />
          </Icon>
        </CaptionButton>
        <CaptionButton aria-label="Επαναφορά">
          <Icon size={15} box={15}>
            <path d="M5 5V2.500h7.500v7H10M5 2h8M2.500 6.500h7v6h-7zM2 6.500h8" stroke="#fff" strokeWidth="1.400" />
          </Icon>
        </CaptionButton>
        <CaptionButton aria-label="Κλείσιμο" $close>
          <Icon size={15} box={15}>
            <path d="M2.500 2.500l10 10M12.500 2.500l-10 10" stroke="#fff" strokeWidth="2.200" />
          </Icon>
        </CaptionButton>
      </CaptionButtons>
    </TitleBar>

    <CommandArea>
      <MenuBar>
        <Grip />
        <MenuItems>
          {menus.map(([before, key, after]) => (
            <MenuItem key={before + key + after}>
              {before}
              <u>{key}</u>
              {after}
            </MenuItem>
          ))}
        </MenuItems>
        <AskBox>
          <AskInput aria-label="Ερώτηση" placeholder="Πληκτρολογήστε ερώτηση" />
          <DropButton aria-label="Πρόσφατες ερωτήσεις">
            <Down />
          </DropButton>
        </AskBox>
        <CloseDocument aria-label="Κλείσιμο εγγράφου">
          <Icon size={8} box={8}>
            <path d="M.500.500l7 7M7.500.500l-7 7" stroke="#000" strokeWidth="1.700" />
          </Icon>
        </CloseDocument>
      </MenuBar>
      <Toolbars />
    </CommandArea>

    <Main>
      <DocumentColumn>
        <RulerRow>
          <TabCorner>
            <TabSelector aria-label="Στηλοθέτης">
              <Icon size={7} box={7}>
                <path d="M1 0h2v4h4v2H1z" fill="#000" />
              </Icon>
            </TabSelector>
          </TabCorner>
          <Centered>
            <HorizontalRuler />
          </Centered>
        </RulerRow>
        <Workspace>
          <SideRuler>
            <VerticalRuler />
          </SideRuler>
          <Centered>
            <Page>
              <Caret />
            </Page>
          </Centered>
        </Workspace>
        <BottomRow>
          {views.map(([label, icon], i) => (
            <ViewButton key={label} aria-label={label} $active={i === 2}>
              {icon}
            </ViewButton>
          ))}
          <HorizontalTrack>
            <ScrollButton aria-label="Κύλιση αριστερά">
              <Chevron turn={-90} />
            </ScrollButton>
            <HorizontalThumb>
              <Icon size={8} box={8}>
                <path d="M0 0h1v7H0zM2 0h1v7H2zM4 0h1v7H4zM6 0h1v7H6z" fill="#eef4fe" />
                <path d="M1 1h1v7H1zM3 1h1v7H3zM5 1h1v7H5zM7 1h1v7H7z" fill="#8cb0f8" />
              </Icon>
            </HorizontalThumb>
            <ScrollButton aria-label="Κύλιση δεξιά">
              <Chevron turn={90} />
            </ScrollButton>
          </HorizontalTrack>
        </BottomRow>
      </DocumentColumn>
      <ScrollColumn>
        <SplitBox />
        <ScrollButton aria-label="Κύλιση επάνω">
          <Chevron turn={0} />
        </ScrollButton>
        <VerticalTrack>
          <VerticalThumb>
            <Icon size={8} box={8}>
              <path d="M0 0h7v1H0zM0 2h7v1H0zM0 4h7v1H0zM0 6h7v1H0z" fill="#eef4fe" />
              <path d="M1 1h7v1H1zM1 3h7v1H1zM1 5h7v1H1zM1 7h7v1H1z" fill="#8cb0f8" />
            </Icon>
          </VerticalThumb>
        </VerticalTrack>
        <ScrollButton aria-label="Κύλιση κάτω">
          <Chevron turn={180} />
        </ScrollButton>
        <BrowseButtons>
          <BrowseButton aria-label="Προηγούμενη σελίδα">
            {glyph('M2 0h1v1h1v1h1v1H0V2h1V1h1zM2 3h1v1h1v1h1v1H0V5h1V4h1z', 6)}
          </BrowseButton>
          <BrowseButton aria-label="Επιλογή αντικειμένου">
            <Icon size={8} box={8}>
              <circle cx="4" cy="4" r="3" fill="#b5b2a4" stroke="#000" />
              <path d="M2.500 3.500l1-1" stroke="#fff" />
            </Icon>
          </BrowseButton>
          <BrowseButton aria-label="Επόμενη σελίδα">
            {glyph('M0 0h5v1H4v1H3v1H2V2H1V1H0zM0 3h5v1H4v1H3v1H2V5H1V4H0z', 6)}
          </BrowseButton>
        </BrowseButtons>
      </ScrollColumn>
    </Main>

    <StatusBar>
      <StatusCell $width={218} $gap={26}>
        <StatusText>Σελίδα&nbsp; 1</StatusText>
        <StatusText>Ενότητα&nbsp; 1</StatusText>
        <StatusEnd>1/1</StatusEnd>
      </StatusCell>
      <StatusCell $width={176} $gap={14}>
        <StatusText>Στα&nbsp; 2,5εκ.</StatusText>
        <StatusText>Γρ.&nbsp; 1</StatusText>
        <StatusText>Στ.&nbsp; 1</StatusText>
      </StatusCell>
      <StatusCell $width={25} $off>ΕΓΓ</StatusCell>
      <StatusCell $width={34} $off>ΑΝΑΘ</StatusCell>
      <StatusCell $width={24} $off>ΕΚΤ</StatusCell>
      <StatusCell $width={25} $off>ΑΝΤ</StatusCell>
      <StatusCell $width={65}>Αγγλικά (Η.</StatusCell>
      <StatusCell $width={44} />
      <StatusCell $width={37}>
        <Icon size={12} box={12}>
          <path d="M3 0h5l2 3-1 4 2 4H7L6 9l-1 2H1l2-4-1-4z" fill="#e00000" stroke="#400" strokeWidth=".8" />
          <path d="M4 2h4v4H4z" fill="#f7e61e" stroke="#000" strokeWidth=".8" />
        </Icon>
      </StatusCell>
      <StatusCell $width={27} />
      <StatusCell $width={29} />
    </StatusBar>

    <TaskBar>
      <StartButton>
        <Icon size={20} box={20}>
          <path d="M3 4c2-2 4-2 6-1L7.500 9C5.500 8 3.500 8 1.500 9.500z" fill="#ee5a28" />
          <path d="M10 3.500c2 1 4 1 6.500-.5L15 9c-2 1.500-4.500 1.500-6.500.500z" fill="#7ac943" />
          <path d="M1.300 10.500c2-1.500 4-1.500 6-.5l-1.600 6C4 15 2 15 0 16.500z" fill="#5b9bf5" />
          <path d="M8.300 10.500c2 1 4 1 6.500-.5l-1.600 6c-2 1.500-4.500 1.500-6.500.5z" fill="#fbc926" />
        </Icon>
        έναρξη
      </StartButton>
      <QuickLaunch>
        {quickLaunch.map(([label, art]) => (
          <QuickButton key={label} aria-label={label}>
            <Icon>{art === 'ie' ? explorer : art}</Icon>
          </QuickButton>
        ))}
      </QuickLaunch>
      <TaskList>
        <TaskButton>
          <Icon>
            <rect x=".500" y=".500" width="15" height="15" fill="#c9532a" stroke="#f0b596" />
            <rect x="3" y="3" width="10" height="10" fill="#fff" />
            <circle cx="7.500" cy="8" r="3" fill="#fff" stroke="#b2401c" strokeWidth="1.600" />
            <path d="M8 8V4.500A3.500 3.500 0 0 1 11.500 8z" fill="#e88a5c" />
          </Icon>
          Microsoft PowerPoint ...
        </TaskButton>
        <TaskButton $active>
          <WordIcon />
          test.doc - Microsoft ...
        </TaskButton>
      </TaskList>
      <Language>EN</Language>
      <Tray>
        <TrayIcons>
          {tray.map(([label, art]) => (
            <span key={label} title={label}>
              <Icon>{art}</Icon>
            </span>
          ))}
        </TrayIcons>
        8:46 πμ
      </Tray>
    </TaskBar>
  </Window>
);

export default App;
